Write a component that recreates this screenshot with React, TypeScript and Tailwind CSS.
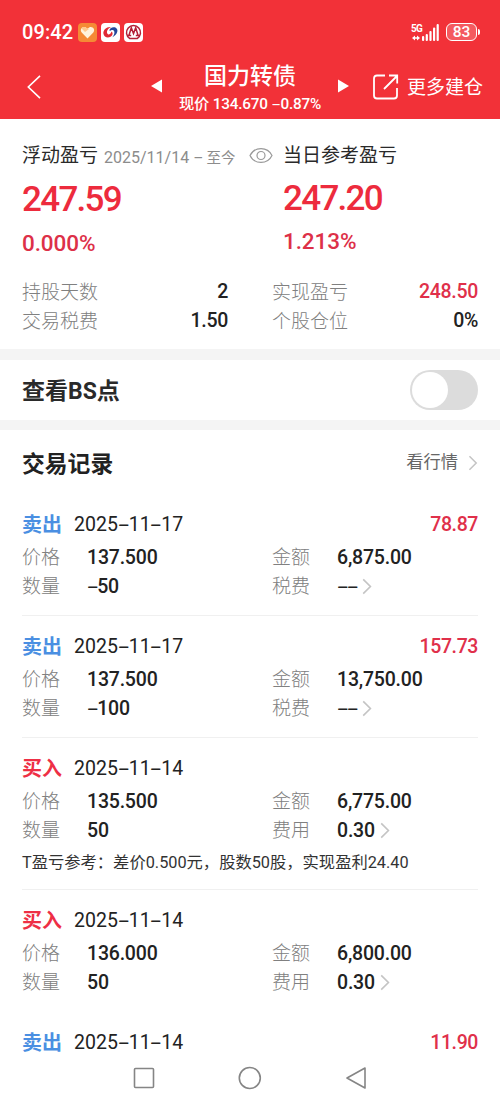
import React from "react";

const numberFont = "font-['Roboto','Noto_Sans_CJK_SC',sans-serif]";

function Num({ children, className = "" }: { children: string; className?: string }) {
  return (
    <span className={`whitespace-pre ${className}`}>
      {children.split(/(-)/).map((part, i) =>
        part === "-" ? (
          <span key={i} className="mx-[2.5px] inline-block origin-center scale-x-[1.95] font-normal">-</span>
        ) : (
          part
        ),
      )}
    </span>
  );
}

function Chevron({ className = "" }: { className?: string }) {
  return (
    <svg viewBox="0 0 10 18" className={className} fill="none" stroke="#c4c4c4" strokeWidth="1.7">
      <path d="M1 1.5 L8.6 9 L1 16.5" />
    </svg>
  );
}

function StatusBar() {
  return (
    <div className="flex h-[64px] items-center pl-[22px] pr-[20px]">
      <span className="w-[56px] text-[20px] font-medium tracking-[0.1px]">09:42</span>
      <div className="flex gap-[4px]">
        <svg viewBox="0 0 19 19" className="size-[19px]">
          <rect width="19" height="19" rx="4" fill="#f58a35" />
          <path d="M9.5 15.5 L3.7 9.6 C1.2 6.4 4.6 2.8 7.8 4.4 L9.5 5.8 L11.2 4.4 C14.4 2.8 17.8 6.4 15.3 9.6 Z" fill="#fff3dc" />
          <path d="M3.3 5.2 L7 9 L11 6 L9.5 5.6 L7.8 4.4 C6 3.5 4.2 4 3.3 5.2Z" fill="#ffc98d" />
        </svg>
        <svg viewBox="0 0 19 19" className="size-[19px]">
          <rect width="19" height="19" rx="4" fill="#fff" />
          <path d="M10 4 C5.5 3.5 2 7 2.4 10.5 C3 15 8.5 15.6 11 12.5 C12 11 11.8 9.2 10.4 8.6 C10.2 10.5 8.6 12 7 11.2 C4.7 9.6 6.5 5.6 10 4Z" fill="#df2935" />
          <path d="M8.4 7.7 C8.4 5 12 3.3 14.8 4.7 C18 6.7 16.4 11.8 11.2 14.3 C13.4 11.9 14.3 8.5 12.3 7.2 C10.8 6.4 9.6 7.8 8.4 7.7Z" fill="#24479b" />
        </svg>
        <svg viewBox="0 0 19 19" className="size-[19px]" fill="none">
          <rect width="19" height="19" rx="4" fill="#fff" />
          <path d="M5.6 15.4 A7 7 0 1 1 13.4 15.4 Z" stroke="#b32036" strokeWidth="1.5" />
          <path d="M5 12.3 L7.3 4.8 L9.5 10.6 L11.7 4.8 L14 12.3 M3.2 12.5 H7.2 M11.8 12.5 H15.8" stroke="#b32036" strokeWidth="1.5" />
        </svg>
      </div>
      <div className="ml-auto flex items-center">
        <div className="flex h-[18px] items-end">
          <div className="flex w-[13px] flex-col items-start">
            <span className="text-[10px] font-bold leading-[9px] tracking-[-0.7px]">5G</span>
            <svg viewBox="0 0 8 6" className="ml-px mt-[2px] h-[6px] w-[8px]" fill="#fff">
              <path d="M0 3 L3 0.5 V5.5Z M8 3 L5 0.5 V5.5Z M3 2.2H5V3.8H3Z" />
            </svg>
          </div>
          <svg viewBox="0 0 17 18" className="-ml-[3px] h-[18px] w-[19px]" fill="#fff">
            <rect x="0" y="13" width="2.2" height="5" rx="1" />
            <rect x="3.7" y="11" width="2.2" height="7" rx="1" />
            <rect x="7.4" y="8" width="2.2" height="10" rx="1" />
            <rect x="11" y="4.5" width="2.2" height="13.5" rx="1" />
            <rect x="14.6" y="1" width="2.2" height="17" rx="1" />
          </svg>
        </div>
        <div className="ml-[6px] flex h-[18px] w-[31px] items-center justify-center rounded-[6px] border-[1.5px] border-white bg-white/20 pt-px text-[15.5px] font-medium leading-none">
          83
        </div>
        <span className="ml-px h-[6px] w-[2px] rounded-r-full bg-white" />
      </div>
    </div>
  );
}

function TitleBar() {
  return (
    <div className="flex h-[55px] items-start">
      <svg viewBox="0 0 14 24" className="ml-[27px] mt-[11px] h-[24px] w-[14px]" fill="none" stroke="#fff" strokeWidth="1.6">
        <path d="M13 0.8 L1.3 12 L13 23.2" />
      </svg>
      <svg viewBox="0 0 12 14" className="ml-[110px] mt-[15px] h-[14px] w-[11px]" fill="#fff">
        <path d="M0 7 L12 0 V14Z" />
      </svg>
      <div className="-mt-[3px] ml-[8px] flex w-[160px] flex-col items-center">
        <span className="h-[31px] text-[23px] font-medium leading-[31px]">国力转债</span>
        <Num className="mt-[2px] text-[15.3px] font-medium leading-[20px] tracking-[-0.2px]">现价 134.670 -0.87%</Num>
      </div>
      <svg viewBox="0 0 12 14" className="ml-[8px] mt-[15px] h-[14px] w-[11px]" fill="#fff">
        <path d="M12 7 L0 0 V14Z" />
      </svg>
      <svg viewBox="0 0 26 26" className="ml-[24px] mt-[10px] size-[26px]" fill="none" stroke="#fff" strokeWidth="1.8">
        <path d="M12 1.5 H4 Q1 1.5 1 4.5 V21.5 Q1 24.5 4 24.5 H21 Q24 24.5 24 21.5 V14" />
        <path d="M11 15 L24 2 M16 1.5 H24.2 V9.5" />
      </svg>
      <span className="ml-[8px] mt-[9px] text-[19px] leading-[30px]">更多建仓</span>
    </div>
  );
}

function StatRow({ label, value, red }: { label: string; value: string; red?: boolean }) {
  return (
    <div className="flex h-[29px] items-center justify-between">
      <span className="pt-[3px] text-[19px] font-light text-[#808080]">{label}</span>
      <span className={`text-[19.5px] font-medium tracking-[-0.3px] ${red ? "text-[#e0304a]" : "text-[#222]"}`}>{value}</span>
    </div>
  );
}

function Summary() {
  return (
    <section className="h-[230px] shrink-0 px-[22px]">
      <div className="flex h-[144px] pt-[22px]">
        <div className="w-[261px]">
          <div className="flex h-[30px] items-center">
            <span className="text-[19px] text-[#2a2a2a]">浮动盈亏</span>
            <span className="ml-[6px] mt-[4px] whitespace-pre text-[16px] text-[#8c8c8c]">
              <Num>2025/11/14 - </Num>
              <span className="text-[14.5px]">至今</span>
            </span>
            <svg viewBox="0 0 24 16" className="-mt-[2px] ml-[13px] h-[17px] w-[24px] shrink-0" fill="none" stroke="#999" strokeWidth="1.2">
              <path d="M1 8 C5.5 -1.2 18.5 -1.2 23 8 C18.5 17.2 5.5 17.2 1 8Z" />
              <circle cx="12" cy="8" r="4" />
            </svg>
          </div>
          <div className="h-[58px] text-[35px] font-medium leading-[58px] tracking-[-1.7px] text-[#ed2b3d]">247.59</div>
          <div className="h-[30px] text-[22.5px] font-medium leading-[28px] tracking-[-0.1px] text-[#dd3048]">0.000%</div>
        </div>
        <div>
          <div className="flex h-[30px] items-center text-[19px] text-[#2a2a2a]">当日参考盈亏</div>
          <div className="h-[56px] text-[35px] font-medium leading-[55px] tracking-[-1.7px] text-[#ed2b3d]">247.20</div>
          <div className="h-[30px] text-[22.5px] font-medium leading-[29px] tracking-[-0.1px] text-[#dd3048]">1.213%</div>
        </div>
      </div>
      <div className="mt-[14px] grid grid-cols-[206px_206px] justify-between">
        <StatRow label="持股天数" value="2" />
        <StatRow label="实现盈亏" value="248.50" red />
        <StatRow label="交易税费" value="1.50" />
        <StatRow label="个股仓位" value="0%" />
      </div>
    </section>
  );
}

interface Trade {
  side: "买入" | "卖出";
  date: string;
  profit?: string;
  price?: string;
  amount?: string;
  quantity?: string;
  feeLabel?: string;
  fee?: string;
  note?: string;
}

const trades: Trade[] = [
  { side: "卖出", date: "2025-11-17", profit: "78.87", price: "137.500", amount: "6,875.00", quantity: "-50", feeLabel: "税费", fee: "--" },
  { side: "卖出", date: "2025-11-17", profit: "157.73", price: "137.500", amount: "13,750.00", quantity: "-100", feeLabel: "税费", fee: "--" },
  { side: "买入", date: "2025-11-14", price: "135.500", amount: "6,775.00", quantity: "50", feeLabel: "费用", fee: "0.30", note: "T盈亏参考：差价0.500元，股数50股，实现盈利24.40" },
  { side: "买入", date: "2025-11-14", price: "136.000", amount: "6,800.00", quantity: "50", feeLabel: "费用", fee: "0.30" },
  { side: "卖出", date: "2025-11-14", profit: "11.90" },
];

function Field({ label, value, more }: { label: string; value: string; more?: boolean }) {
  return (
    <div className="flex h-[29px] items-center">
      <span className="w-[65px] pt-[2px] text-[19px] font-light text-[#808080]">{label}</span>
      <Num className="text-[19.5px] font-medium tracking-[-0.2px] text-[#222]">{value}</Num>
      {more && <Chevron className="ml-[5px] h-[17px] w-[10px]" />}
    </div>
  );
}

function TradeItem({ trade, divider }: { trade: Trade; divider: boolean }) {
  return (
    <div className={`shrink-0 border-b pt-[12px] ${divider ? "border-[#f0f0f0]" : "border-transparent"}`}>
      <div className="flex h-[37px] items-center">
        <span className={`w-[52px] text-[20px] font-bold ${trade.side === "卖出" ? "text-[#4a8fe2]" : "text-[#ee2f45]"}`}>{trade.side}</span>
        <Num className="text-[19.5px] tracking-[0.08px] text-[#222]">{trade.date}</Num>
        {trade.profit && <span className="ml-auto text-[19.5px] font-medium tracking-[-0.4px] text-[#e0304a]">{trade.profit}</span>}
      </div>
      {trade.price && (
        <div className="grid grid-cols-[250px_1fr]">
          <Field label="价格" value={trade.price} />
          <Field label="金额" value={trade.amount ?? ""} />
          <Field label="数量" value={trade.quantity ?? ""} />
          <Field label={trade.feeLabel ?? ""} value={trade.fee ?? ""} more />
        </div>
      )}
      {trade.note && <div className="h-[30px] whitespace-nowrap text-[16.3px] leading-[35px] text-[#333]">{trade.note}</div>}
      <div className="h-[14px]" />
    </div>
  );
}

export default function App() {
  return (
    <div lang="zh-CN" className={`flex h-[1105px] w-[500px] flex-col overflow-hidden bg-white ${numberFont}`}>
      <header className="h-[119px] shrink-0 bg-[#f23138] text-white">
        <StatusBar />
        <TitleBar />
      </header>
      <main className="flex min-h-0 flex-1 flex-col overflow-hidden">
        <Summary />
        <div className="h-[11px] shrink-0 bg-[#f4f4f4]" />
        <section className="flex h-[60px] shrink-0 items-center justify-between px-[22px]">
          <span className="pt-[4px] text-[23px] font-bold text-[#2a2a2a]">查看BS点</span>
          <div className="flex h-[40px] w-[68px] items-center rounded-full bg-[#dcdcdc] pl-[2px]">
            <span className="size-[36px] rounded-full bg-white" />
          </div>
        </section>
        <div className="h-[10px] shrink-0 bg-[#f4f4f4]" />
        <section className="flex flex-col px-[22px]">
          <div className="flex h-[64px] shrink-0 items-center justify-between">
            <span className="pt-[6px] text-[22.8px] font-bold text-[#222]">交易记录</span>
            <span className="flex items-center pt-[2px] text-[17.3px] text-[#666]">
              看行情
              <Chevron className="ml-[10px] h-[16px] w-[10px]" />
            </span>
          </div>
          {trades.map((trade, i) => (
            <TradeItem key={i} trade={trade} divider={i < 3} />
          ))}
        </section>
      </main>
      <nav className="flex h-[48px] shrink-0 items-start justify-center bg-white pt-[9px]">
        <svg viewBox="0 0 240 24" className="h-[24px] w-[240px]" fill="none" stroke="#858585" strokeWidth="1.6" strokeLinejoin="round">
          <rect x="4.5" y="2.5" width="19" height="19" rx="1" />
          <circle cx="119.8" cy="12" r="10.5" />
          <path d="M235 2 L217 12 L235 22Z" />
        </svg>
      </nav>
    </div>
  );
}
